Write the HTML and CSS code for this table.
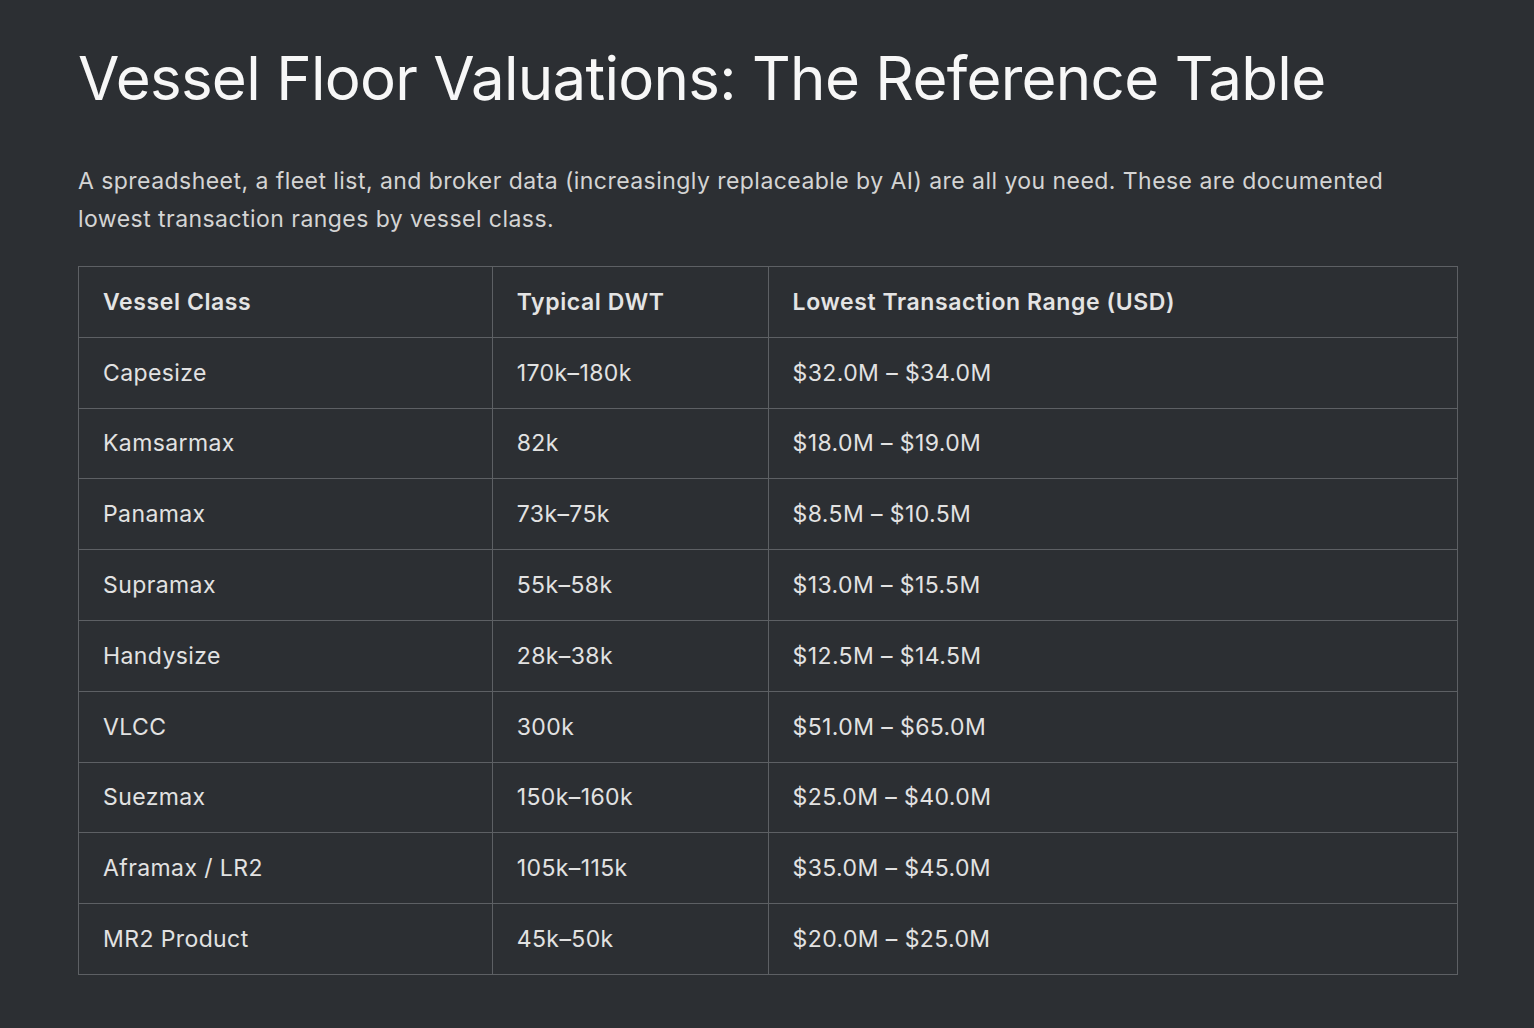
FILE: index.html
```html
<!DOCTYPE html>
<html lang="en">
<head>
<meta charset="utf-8">
<title>Vessel Floor Valuations</title>
<link rel="stylesheet" href="styles.css">
</head>
<body>
<main class="page">
  <h1 class="title">Vessel Floor Valuations: The Reference Table</h1>
  <p class="intro">A spreadsheet, a fleet list, and broker data (increasingly replaceable by AI) are all you need. These are documented lowest transaction ranges by vessel class.</p>
  <table class="data">
    <colgroup>
      <col class="c1"><col class="c2"><col class="c3">
    </colgroup>
    <thead>
      <tr><th>Vessel Class</th><th>Typical DWT</th><th>Lowest Transaction Range (USD)</th></tr>
    </thead>
    <tbody>
      <tr><td>Capesize</td><td>170k–180k</td><td>$32.0M – $34.0M</td></tr>
      <tr><td>Kamsarmax</td><td>82k</td><td>$18.0M – $19.0M</td></tr>
      <tr><td>Panamax</td><td>73k–75k</td><td>$8.5M – $10.5M</td></tr>
      <tr><td>Supramax</td><td>55k–58k</td><td>$13.0M – $15.5M</td></tr>
      <tr><td>Handysize</td><td>28k–38k</td><td>$12.5M – $14.5M</td></tr>
      <tr><td>VLCC</td><td>300k</td><td>$51.0M – $65.0M</td></tr>
      <tr><td>Suezmax</td><td>150k–160k</td><td>$25.0M – $40.0M</td></tr>
      <tr><td>Aframax / LR2</td><td>105k–115k</td><td>$35.0M – $45.0M</td></tr>
      <tr><td>MR2 Product</td><td>45k–50k</td><td>$20.0M – $25.0M</td></tr>
    </tbody>
  </table>
</main>
</body>
</html>
```
FILE: styles.css
```css
html, body {
  margin: 0;
  background: #2c2f33;
}
body {
  font-family: Inter, "Noto Sans", sans-serif;
  color: #e6e6e6;
}
.page {
  padding: 40px 60px 0 78px;
}
.title {
  margin: 0;
  font-size: 60px;
  font-weight: 400;
  line-height: 76px;
  color: #f7f7f7;
  letter-spacing: -0.7px;
}
.intro {
  margin: 46px 0 0 0;
  font-size: 23px;
  letter-spacing: 0.45px;
  line-height: 38px;
  color: #d4d4d4;
  max-width: 1330px;
}
.data {
  margin-top: 28px;
  width: 1380px;
  border-collapse: collapse;
  border: 1px solid #5d6064;
  font-size: 23px;
  letter-spacing: 0.4px;
  color: #e2e2e2;
}
.c1 { width: 414px; }
.c2 { width: 276px; }
.c3 { width: 690px; }
.data th, .data td {
  border: 1px solid #5d6064;
  height: 70.8px;
  padding: 0 24px;
  text-align: left;
  vertical-align: middle;
  box-sizing: border-box;
}
.data th {
  font-weight: 600;
  letter-spacing: 0.6px;
  color: #e4e4e4;
}
```
